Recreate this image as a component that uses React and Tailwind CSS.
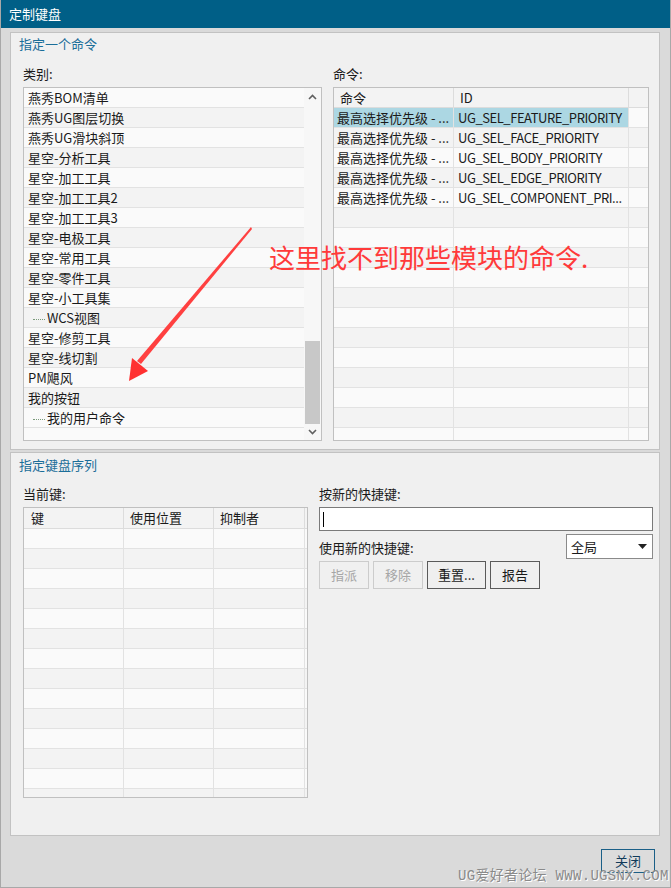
import React from 'react';

const categories = [
  { name: '燕秀BOM清单' },
  { name: '燕秀UG图层切换' },
  { name: '燕秀UG滑块斜顶' },
  { name: '星空-分析工具' },
  { name: '星空-加工工具' },
  { name: '星空-加工工具2' },
  { name: '星空-加工工具3' },
  { name: '星空-电极工具' },
  { name: '星空-常用工具' },
  { name: '星空-零件工具' },
  { name: '星空-小工具集' },
  { name: 'WCS视图', child: true },
  { name: '星空-修剪工具' },
  { name: '星空-线切割' },
  { name: 'PM飓风' },
  { name: '我的按钮' },
  { name: '我的用户命令', child: true },
];

const commands = [
  { name: '最高选择优先级 - ...', id: 'UG_SEL_FEATURE_PRIORITY' },
  { name: '最高选择优先级 - ...', id: 'UG_SEL_FACE_PRIORITY' },
  { name: '最高选择优先级 - ...', id: 'UG_SEL_BODY_PRIORITY' },
  { name: '最高选择优先级 - ...', id: 'UG_SEL_EDGE_PRIORITY' },
  { name: '最高选择优先级 - ...', id: 'UG_SEL_COMPONENT_PRI...' },
];

const rowBg = (i) => (i % 2 === 0 ? 'bg-[#fafafa]' : 'bg-[#f3f3f3]');

const App = () => {
  return (
    <div
      className="relative w-[671px] h-[888px] bg-[#dadada] text-[13px] text-[#1a1a1a] border-l border-r border-b border-[#a8a8a8] overflow-hidden"
      style={{ fontFamily: '"Noto Sans CJK SC", "Noto Sans", sans-serif' }}
    >
      {/* Title bar */}
      <div className="h-[28px] bg-[#005f87] text-white flex items-center pl-[8px] text-[13px]">定制键盘</div>

      <div className="pl-[9px] pr-[10px] pt-[4px]">
        {/* Panel 1 */}
        <div className="h-[418px] bg-[#f0f0f0] border border-[#c2c2c2] relative">
          <div className="h-[24px] pl-[8px] pt-[2px] text-[#1b6e99] leading-[18px]">指定一个命令</div>
          <div className="flex pl-[12px] pt-[6px] gap-[11px]">
            {/* Category list */}
            <div className="w-[299px]">
              <div className="h-[24px] leading-[18px] pt-[2px]">类别:</div>
              <div className="h-[354px] border border-[#c0c0c0] bg-[#fafafa] flex">
                <div className="flex-1 overflow-hidden">
                  {categories.map((c, i) => (
                    <div
                      key={i}
                      className={`h-[20px] border-b border-[#e2e2e2] flex items-center leading-none ${rowBg(i)} ${c.child ? 'pl-[9px]' : 'pl-[4px]'}`}
                    >
                      {c.child && (
                        <span className="w-[12px] mr-[2px] border-b border-dotted border-[#7a9a7a] mt-[3px]" />
                      )}
                      <span>{c.name}</span>
                    </div>
                  ))}
                  <div className="h-[14px] bg-[#fafafa]" />
                </div>
                <div className="w-[17px] bg-[#f7f7f7] flex flex-col items-center">
                  <div className="h-[18px] flex items-center justify-center">
                    <svg width="9" height="6" viewBox="0 0 9 6">
                      <path d="M1 5 L4.5 1.5 L8 5" fill="none" stroke="#606060" strokeWidth="1.6" />
                    </svg>
                  </div>
                  <div className="flex-1 w-full flex flex-col justify-end px-[1px]">
                    <div className="h-[83px] bg-[#c8c8c8]" />
                  </div>
                  <div className="h-[16px] flex items-center justify-center">
                    <svg width="9" height="6" viewBox="0 0 9 6">
                      <path d="M1 1 L4.5 4.5 L8 1" fill="none" stroke="#606060" strokeWidth="1.6" />
                    </svg>
                  </div>
                </div>
              </div>
            </div>

            {/* Command table */}
            <div className="w-[316px]">
              <div className="h-[24px] leading-[18px] pt-[2px]">命令:</div>
              <div className="h-[354px] border border-[#c0c0c0] bg-[#fafafa] overflow-hidden">
                <div className="flex h-[20px] bg-[#f3f3f3] border-b border-[#dcdcdc]">
                  <div className="w-[120px] border-r border-[#dcdcdc] pl-[6px] flex items-center">命令</div>
                  <div className="w-[175px] border-r border-[#dcdcdc] pl-[6px] flex items-center">ID</div>
                  <div className="flex-1" />
                </div>
                {Array.from({ length: 17 }).map((_, i) => {
                  const c = commands[i];
                  const sel = i === 0;
                  return (
                    <div key={i} className={`flex h-[20px] border-b border-[#e2e2e2] ${rowBg(i)}`}>
                      <div
                        className={`w-[120px] border-r border-[#e2e2e2] pl-[3px] flex items-center whitespace-nowrap overflow-hidden ${sel ? 'bg-[#acd7e3]' : ''}`}
                      >
                        {c ? c.name : ''}
                      </div>
                      <div
                        className={`w-[175px] border-r border-[#e2e2e2] pl-[4px] flex items-center whitespace-nowrap overflow-hidden tracking-[-0.45px] ${sel ? 'bg-[#acd7e3]' : ''}`}
                      >
                        {c ? c.id : ''}
                      </div>
                      <div className="flex-1" />
                    </div>
                  );
                })}
              </div>
            </div>
          </div>
        </div>

        {/* Panel 2 */}
        <div className="mt-[2px] h-[384px] bg-[#f0f0f0] border border-[#c2c2c2]">
          <div className="h-[24px] pl-[8px] pt-[3px] text-[#1b6e99] leading-[18px]">指定键盘序列</div>
          <div className="flex pl-[12px] pt-[7px] gap-[11px]">
            {/* Current keys */}
            <div className="w-[285px]">
              <div className="h-[23px] leading-[18px] pt-[1px]">当前键:</div>
              <div className="h-[291px] border border-[#c0c0c0] bg-[#fafafa] overflow-hidden">
                <div className="flex h-[21px] bg-[#f3f3f3] border-b border-[#dcdcdc]">
                  <div className="w-[100px] border-r border-[#dcdcdc] pl-[7px] flex items-center">键</div>
                  <div className="w-[90px] border-r border-[#dcdcdc] pl-[6px] flex items-center">使用位置</div>
                  <div className="w-[91px] border-r border-[#dcdcdc] pl-[6px] flex items-center">抑制者</div>
                </div>
                {Array.from({ length: 14 }).map((_, i) => (
                  <div key={i} className={`flex h-[20px] border-b border-[#e2e2e2] ${rowBg(i)}`}>
                    <div className="w-[100px] border-r border-[#e2e2e2]" />
                    <div className="w-[90px] border-r border-[#e2e2e2]" />
                    <div className="w-[91px] border-r border-[#e2e2e2]" />
                  </div>
                ))}
              </div>
            </div>

            {/* New shortcut */}
            <div className="w-[334px] pt-[1px]">
              <div className="h-[22px] leading-[18px]">按新的快捷键:</div>
              <div className="h-[24px] border border-[#7a7a7a] bg-white flex items-center pl-[3px]">
                <div className="w-[1px] h-[15px] bg-black" />
              </div>
              <div className="flex items-center justify-between mt-[3px] h-[25px]">
                <span className="pt-[2px]">使用新的快捷键:</span>
                <div className="w-[87px] h-[25px] border border-[#8a8a8a] bg-white flex items-center justify-between pl-[4px] pr-[5px]">
                  <span>全局</span>
                  <svg width="9" height="5" viewBox="0 0 9 5">
                    <path d="M0 0 L9 0 L4.5 5 Z" fill="#222" />
                  </svg>
                </div>
              </div>
              <div className="flex gap-[4px] mt-[2px]">
                <button className="w-[50px] h-[28px] border border-[#cccccc] bg-[#f0f0f0] text-[#a6a6a6]">指派</button>
                <button className="w-[50px] h-[28px] border border-[#cccccc] bg-[#f0f0f0] text-[#a6a6a6]">移除</button>
                <button className="w-[59px] h-[28px] border border-[#5a5a5a] bg-[#efefef]">重置...</button>
                <button className="w-[50px] h-[28px] border border-[#5a5a5a] bg-[#efefef]">报告</button>
              </div>
            </div>
          </div>
        </div>

        {/* Footer */}
        <div className="flex justify-end pt-[13px] pr-[5px]">
          <button className="w-[54px] h-[24px] border border-[#1a5f87] bg-[#dcdcdc] text-[#103a5a] flex items-center justify-center">
            关闭
          </button>
        </div>
      </div>

      {/* Annotation overlay */}
      <svg className="absolute left-0 top-0 pointer-events-none" width="671" height="888">
        <path d="M250 227 L251 229 L140 364 L136 361 Z" fill="#ff4040" />
        <path d="M128 381 L131 358 L147 371 Z" fill="#ff3030" />
      </svg>
      <div className="absolute left-[268px] top-[240px] text-[26px] leading-[34px] text-[#ff3a3a] whitespace-nowrap">
        这里找不到那些模块的命令.
      </div>

      {/* Watermark */}
      <div
        className="absolute left-[457px] top-[866px] text-[14px] leading-[20px] text-[#8a8a8a] whitespace-nowrap tracking-[0.3px]"
        style={{ fontFamily: '"Liberation Mono", "Noto Sans CJK SC", monospace', textShadow: '1px 1px 0 #ffffff' }}
      >
        UG爱好者论坛 WWW.UGSNX.COM
      </div>
    </div>
  );
};

export default App;
